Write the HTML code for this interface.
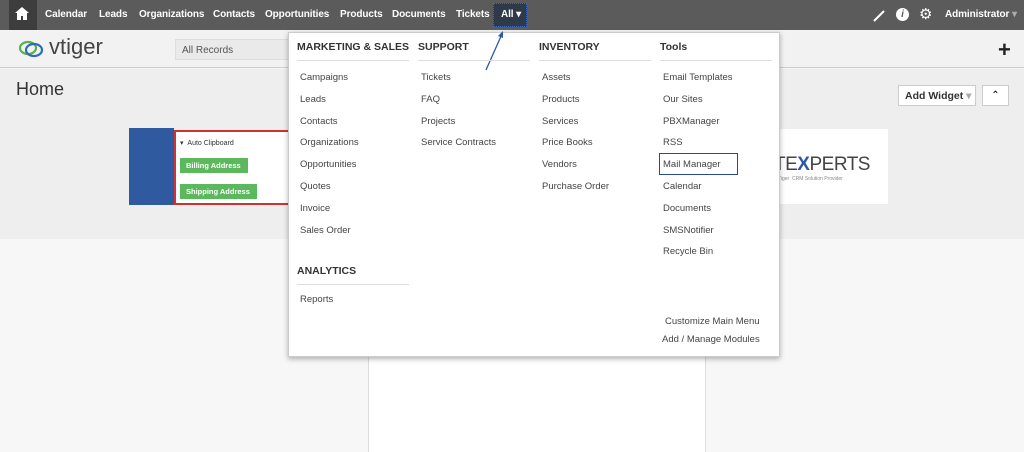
<!DOCTYPE html>
<html><head><style>
*{margin:0;padding:0;box-sizing:border-box}
body{width:1024px;height:452px;overflow:hidden;position:relative;font-family:"Liberation Sans",sans-serif;background:#f7f7f7}
.a{position:absolute;white-space:nowrap}
.top{left:0;top:0;width:1024px;height:30px;background:#5b5b5b}
.nav{color:#fff;font-size:10px;font-weight:bold;top:9px;letter-spacing:-0.1px}
.hdr{left:0;top:30px;width:1024px;height:38px;background:#f2f2f2;border-bottom:1px solid #ccc}
.cont{left:0;top:69px;width:1024px;height:170px;background:#eeeeee}
.dd{left:288px;top:32px;width:492px;height:325px;background:#fff;border:1px solid #ccc;box-shadow:0 2px 5px rgba(0,0,0,.3)}
.h{font-size:10.5px;font-weight:bold;color:#333}
.ln{height:1px;background:#ddd;width:112px}
.i{font-size:9.5px;color:#444}
</style></head><body>
<div class="a top"></div>
<div class="a" style="left:9px;top:0;width:28px;height:30px;background:#3d3d3d"></div>
<svg class="a" style="left:15px;top:7px" width="14" height="13" viewBox="0 0 14 13"><path d="M7 0L0 6h2v7h4V9h2v4h4V6h2z" fill="#fff"/></svg>
<div class="a nav" style="left:45px">Calendar</div>
<div class="a nav" style="left:99px">Leads</div>
<div class="a nav" style="left:139px">Organizations</div>
<div class="a nav" style="left:213px">Contacts</div>
<div class="a nav" style="left:265px">Opportunities</div>
<div class="a nav" style="left:340px">Products</div>
<div class="a nav" style="left:392px">Documents</div>
<div class="a nav" style="left:456px">Tickets</div>
<div class="a" style="left:493px;top:3px;width:34px;height:24px;background:#2e3a4a;border:1px dotted #3a6bc0"></div>
<div class="a nav" style="left:501px">All ▾</div>
<svg class="a" style="left:872px;top:8px" width="14" height="14"><path d="M2 13L12 3" stroke="#fff" stroke-width="2"/></svg>
<div class="a" style="left:896px;top:8px;width:13px;height:13px;border-radius:50%;background:#fff;color:#5b5b5b;font-size:10px;font-weight:bold;text-align:center;line-height:13px;font-style:italic">i</div>
<div class="a" style="left:919px;top:5px;color:#fff;font-size:15px">⚙</div>
<div class="a nav" style="left:945px">Administrator <span style="color:#aaa">▾</span></div>
<div class="a hdr"></div>
<svg class="a" style="left:17px;top:38px" width="30" height="22"><ellipse cx="11" cy="10" rx="8" ry="6" fill="none" stroke="#5bb04a" stroke-width="2.2"/><ellipse cx="17" cy="12" rx="8" ry="6" fill="none" stroke="#2e6db5" stroke-width="2.2"/></svg>
<div class="a" style="left:49px;top:34px;font-size:22px;color:#444">vtiger</div>
<div class="a" style="left:175px;top:39px;width:115px;height:21px;background:#eaeaea;border:1px solid #ddd;font-size:10px;color:#555;padding:5px 6px">All Records</div>
<div class="a" style="left:998px;top:37px;font-size:22px;font-weight:bold;color:#222">+</div>
<div class="a cont"></div>
<div class="a" style="left:16px;top:79px;font-size:18px;color:#333">Home</div>
<div class="a" style="left:898px;top:85px;width:78px;height:21px;background:#fff;border:1px solid #ccc;font-size:10.5px;font-weight:bold;color:#333;padding:4px 6px">Add Widget <span style="color:#aaa">▾</span></div>
<div class="a" style="left:982px;top:85px;width:27px;height:21px;background:#fff;border:1px solid #ccc;font-size:10px;text-align:center;line-height:19px">⌃</div>
<div class="a" style="left:129px;top:128px;width:45px;height:77px;background:#2f5aa0"></div>
<div class="a" style="left:174px;top:130px;width:120px;height:75px;background:#fff;border:2px solid #c33"></div>
<div class="a" style="left:180px;top:139px;font-size:7px;color:#333">▾ &nbsp;Auto Clipboard</div>
<div class="a" style="left:180px;top:158px;width:68px;height:15px;background:#5cb85c;color:#fff;font-size:7.5px;font-weight:bold;padding:3px 6px">Billing Address</div>
<div class="a" style="left:180px;top:184px;width:77px;height:15px;background:#5cb85c;color:#fff;font-size:7.5px;font-weight:bold;padding:3px 6px">Shipping Address</div>
<div class="a" style="left:760px;top:129px;width:128px;height:75px;background:#fff"></div>
<div class="a" style="left:774px;top:154px;font-size:19px;color:#444;letter-spacing:-0.5px">TE<b style="color:#2a58a8">X</b>PERTS</div>
<div class="a" style="left:778px;top:176px;font-size:5px;color:#888">Tiger &nbsp;CRM Solution Provider</div>
<div class="a" style="left:368px;top:239px;width:338px;height:213px;background:#fff;border-left:1px solid #ddd;border-right:1px solid #ddd"></div>
<div class="a dd"></div>
<svg class="a" style="left:480px;top:28px" width="30" height="45"><path d="M6 42L22 6" stroke="#2a5aa8" stroke-width="1.3"/><path d="M18 8l5-5 0 7z" fill="#2a5aa8"/></svg>
<div class="a h" style="left:297px;top:41px">MARKETING &amp; SALES</div>
<div class="a h" style="left:418px;top:41px">SUPPORT</div>
<div class="a h" style="left:539px;top:41px">INVENTORY</div>
<div class="a h" style="left:660px;top:41px">Tools</div>
<div class="a ln" style="left:297px;top:60px"></div>
<div class="a ln" style="left:418px;top:60px"></div>
<div class="a ln" style="left:539px;top:60px"></div>
<div class="a ln" style="left:660px;top:60px"></div>
<div class="a i" style="left:300px;top:67px;line-height:21.8px">Campaigns<br>Leads<br>Contacts<br>Organizations<br>Opportunities<br>Quotes<br>Invoice<br>Sales Order</div>
<div class="a i" style="left:421px;top:67px;line-height:21.8px">Tickets<br>FAQ<br>Projects<br>Service Contracts</div>
<div class="a i" style="left:542px;top:67px;line-height:21.8px">Assets<br>Products<br>Services<br>Price Books<br>Vendors<br>Purchase Order</div>
<div class="a i" style="left:663px;top:67px;line-height:21.8px">Email Templates<br>Our Sites<br>PBXManager<br>RSS<br>Mail Manager<br>Calendar<br>Documents<br>SMSNotifier<br>Recycle Bin</div>
<div class="a" style="left:659px;top:153px;width:79px;height:22px;border:1.5px solid #2a4a8a"></div>
<div class="a h" style="left:297px;top:265px">ANALYTICS</div>
<div class="a ln" style="left:297px;top:284px"></div>
<div class="a i" style="left:300px;top:294px">Reports</div>
<div class="a i" style="left:665px;top:316px">Customize Main Menu</div>
<div class="a i" style="left:662px;top:334px">Add / Manage Modules</div>
</body></html>
